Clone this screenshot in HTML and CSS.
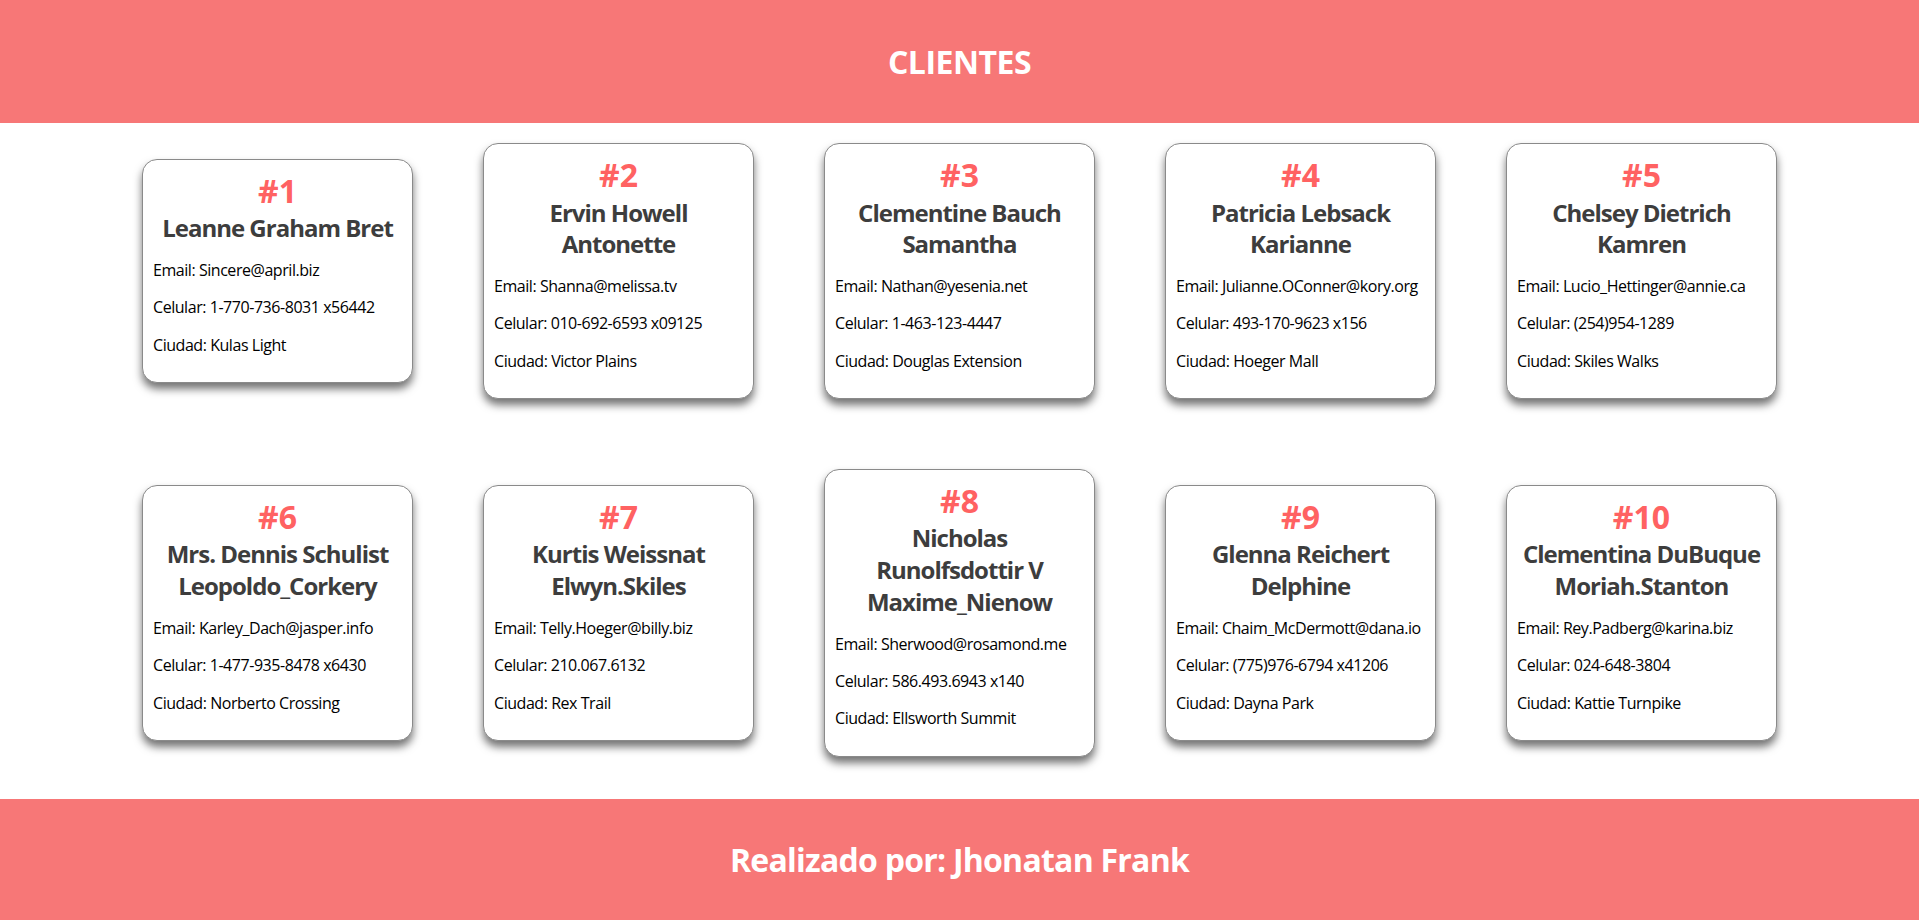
FILE: index.html
```html
<!DOCTYPE html>
<html lang="es">
<head>
<meta charset="utf-8">
<title>Clientes</title>
<link rel="stylesheet" href="styles.css">
</head>
<body>
<header class="top-bar"><h1 class="bar-title title-main">CLIENTES</h1></header>
<main class="grid">
  <div class="row">
    <article class="card"><h1 class="card-num">#1</h1><h2 class="card-name">Leanne Graham Bret</h2><p>Email: Sincere@april.biz</p><p>Celular: 1-770-736-8031 x56442</p><p>Ciudad: Kulas Light</p></article>
    <article class="card"><h1 class="card-num">#2</h1><h2 class="card-name">Ervin Howell<br>Antonette</h2><p>Email: Shanna@melissa.tv</p><p>Celular: 010-692-6593 x09125</p><p>Ciudad: Victor Plains</p></article>
    <article class="card"><h1 class="card-num">#3</h1><h2 class="card-name">Clementine Bauch<br>Samantha</h2><p>Email: Nathan@yesenia.net</p><p>Celular: 1-463-123-4447</p><p>Ciudad: Douglas Extension</p></article>
    <article class="card"><h1 class="card-num">#4</h1><h2 class="card-name">Patricia Lebsack<br>Karianne</h2><p>Email: Julianne.OConner@kory.org</p><p>Celular: 493-170-9623 x156</p><p>Ciudad: Hoeger Mall</p></article>
    <article class="card"><h1 class="card-num">#5</h1><h2 class="card-name">Chelsey Dietrich<br>Kamren</h2><p>Email: Lucio_Hettinger@annie.ca</p><p>Celular: (254)954-1289</p><p>Ciudad: Skiles Walks</p></article>
  </div>
  <div class="row">
    <article class="card"><h1 class="card-num">#6</h1><h2 class="card-name">Mrs. Dennis Schulist<br>Leopoldo_Corkery</h2><p>Email: Karley_Dach@jasper.info</p><p>Celular: 1-477-935-8478 x6430</p><p>Ciudad: Norberto Crossing</p></article>
    <article class="card"><h1 class="card-num">#7</h1><h2 class="card-name">Kurtis Weissnat<br>Elwyn.Skiles</h2><p>Email: Telly.Hoeger@billy.biz</p><p>Celular: 210.067.6132</p><p>Ciudad: Rex Trail</p></article>
    <article class="card"><h1 class="card-num">#8</h1><h2 class="card-name">Nicholas<br>Runolfsdottir V<br>Maxime_Nienow</h2><p>Email: Sherwood@rosamond.me</p><p>Celular: 586.493.6943 x140</p><p>Ciudad: Ellsworth Summit</p></article>
    <article class="card"><h1 class="card-num">#9</h1><h2 class="card-name">Glenna Reichert<br>Delphine</h2><p>Email: Chaim_McDermott@dana.io</p><p>Celular: (775)976-6794 x41206</p><p>Ciudad: Dayna Park</p></article>
    <article class="card"><h1 class="card-num">#10</h1><h2 class="card-name">Clementina DuBuque<br>Moriah.Stanton</h2><p>Email: Rey.Padberg@karina.biz</p><p>Celular: 024-648-3804</p><p>Ciudad: Kattie Turnpike</p></article>
  </div>
</main>
<footer class="bottom-bar"><h1 class="bar-title title-foot">Realizado por: Jhonatan Frank</h1></footer>
</body>
</html>
```
FILE: styles.css
```css
* { box-sizing: border-box; }
html, body { margin: 0; padding: 0; }
body {
  font-family: "Open Sans", "Noto Sans", sans-serif;
  background: #ffffff;
  color: #000000;
}
.top-bar, .bottom-bar {
  background: #f77777;
  height: 123px;
  display: flex;
  align-items: center;
  justify-content: center;
}
.bottom-bar { height: 122px; }
.bar-title {
  margin: 0;
  color: #ffffff;
  font-size: 32px;
  font-weight: 700;
  line-height: 42px;
}
.title-main { letter-spacing: -0.5px; }
.title-foot { letter-spacing: -0.75px; }
.grid {
  display: flex;
  flex-direction: column;
  gap: 70px;
  padding: 20px 0 42px;
}
.row {
  display: flex;
  justify-content: center;
  align-items: center;
  gap: 70px;
}
.card {
  width: 271px;
  padding: 10px;
  border: 1px solid #8a8a8a;
  border-radius: 15px;
  background: #fff;
  box-shadow: 0 6px 8px rgba(0, 0, 0, 0.55);
}
.card-num {
  margin: 0;
  text-align: center;
  color: #ff6262;
  font-size: 32px;
  font-weight: 700;
  line-height: 42.5px;
}
.card-name {
  margin: 0;
  text-align: center;
  color: #3d3d3d;
  font-size: 24px;
  font-weight: 700;
  line-height: 31.8px;
  letter-spacing: -1px;
  white-space: nowrap;
}
.card p {
  margin: 16px 0;
  font-size: 16px;
  line-height: 21.3px;
  letter-spacing: -0.45px;
  white-space: nowrap;
}
```
